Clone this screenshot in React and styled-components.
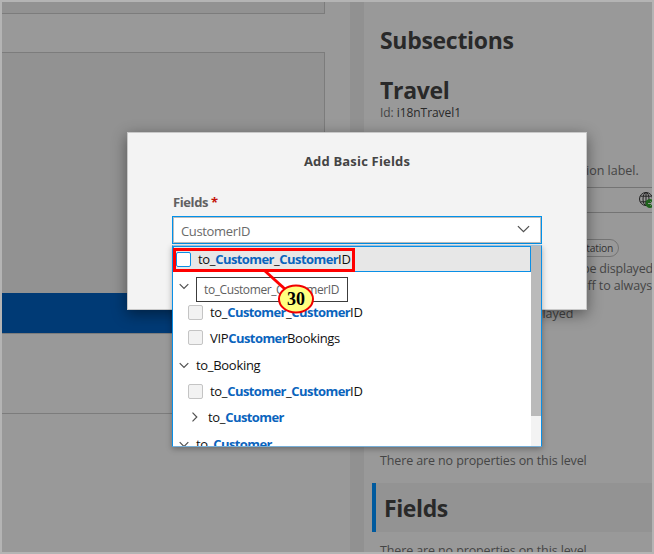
import React from "react";
import styled, { createGlobalStyle } from "styled-components";

const Global = createGlobalStyle`
  * { box-sizing: border-box; }
  body { margin: 0; font-family: "Open Sans", "Noto Sans", sans-serif; overflow: hidden; }
`;

const Frame = styled.div`
  position: relative;
  width: 654px;
  height: 554px;
  border: 2px solid #b4b4b4;
  background: #999;
  overflow: hidden;
`;

const Workspace = styled.div`
  display: grid;
  grid-template-columns: 348px 14px minmax(0, 1fr);
  height: 550px;
`;

const Canvas = styled.div`
  display: flex;
  flex-direction: column;
`;

const Panel = styled.div`
  width: 323px;
  height: ${(p) => p.$height}px;
  margin-bottom: ${(p) => p.$gap || 0}px;
  background: #929292;
  border: solid #7c7c7c;
  border-width: ${(p) => (p.$top ? "1px 1px 1px 0" : "0 1px 1px 0")};
  display: flex;
  flex-direction: column;
  justify-content: flex-end;
`;

const SelectedBand = styled.div`
  height: 40px;
  background: #003a75;
`;

const Rule = styled.div`
  width: 323px;
  margin-top: 79px;
  border-top: 1px solid #7c7c7c;
`;

const Splitter = styled.div`
  background: #919191;
`;

const Side = styled.div`
  display: flex;
  flex-direction: column;
  height: 550px;
  overflow: hidden;
  white-space: nowrap;
  color: #454545;
`;

const Heading = styled.div`
  margin: ${(p) => p.$gap}px 0 0 16px;
  height: 30px;
  line-height: 30px;
  font-size: 23px;
  font-weight: 700;
  letter-spacing: -0.3px;
  color: #292929;
  flex: none;
`;

const Line = styled.div`
  height: 18px;
  line-height: 18px;
  margin: ${(p) => p.$gap || 0}px 0 0 ${(p) => p.$indent || 16}px;
  font-size: ${(p) => p.$size || 12.5}px;
  letter-spacing: ${(p) => p.$track || 0}px;
  flex: none;
  b { font-weight: 500; color: #292929; }
`;

const LabelField = styled.div`
  display: flex;
  align-items: center;
  justify-content: flex-end;
  flex: none;
  height: 26px;
  margin: 7px 0 0 16px;
  border: solid #747474;
  border-width: 1px 0;
`;

const Tag = styled.div`
  align-self: flex-start;
  flex: none;
  width: 103px;
  height: 18px;
  line-height: 16px;
  margin: 26px 0 0 152px;
  padding-right: 5px;
  text-align: right;
  border: 1px solid #747474;
  border-radius: 9px;
  font-size: 10.3px;
  letter-spacing: -0.25px;
  color: #333;
`;

const ActiveSection = styled.div`
  height: 49px;
  flex: none;
  margin: 13px 0 0 8px;
  padding: 10px 0 0 8px;
  border-left: 4px solid #005a9e;
  background: #939393;
  font-size: 23px;
  line-height: 30px;
  font-weight: 700;
  letter-spacing: -0.4px;
  color: #292929;
`;

const Dialog = styled.section`
  position: absolute;
  left: 125px;
  top: 130px;
  width: 460px;
  height: 178px;
  padding: 0 44px;
  border: 1px solid #c8c8c8;
  background: #f3f3f3;
  box-shadow: 0 4px 14px rgba(0, 0, 0, 0.45);
`;

const DialogTitle = styled.div`
  margin-top: 18px;
  line-height: 20px;
  text-align: center;
  font-size: 13px;
  font-weight: 700;
  letter-spacing: 0.18px;
  color: #444;
`;

const FieldLabel = styled.div`
  margin: 21px 0 0 1px;
  line-height: 20px;
  font-size: 13px;
  font-weight: 700;
  letter-spacing: -0.4px;
  color: #616161;
  span { color: #c4120a; }
`;

const Combo = styled.div`
  display: flex;
  align-items: center;
  justify-content: space-between;
  width: 370px;
  height: 28px;
  margin-top: 4px;
  padding: 0 11px 0 8px;
  border: 1px solid #0091ea;
  box-shadow: inset 0 0 0 1px #bdbdbd;
  background: #fff;
  font-size: 13px;
  letter-spacing: -0.35px;
  color: #6a6a6a;
  span { padding-top: 2px; }
  svg { margin-top: -3px; }
`;

const Popup = styled.div`
  position: absolute;
  left: 170px;
  top: 243px;
  width: 370px;
  height: 202px;
  display: flex;
  border: 1px solid #0a8fe6;
  border-top-color: #9bbfdb;
  border-bottom-color: #78afd8;
  background: #fff;
  box-shadow: 0 2px 6px rgba(0, 0, 0, 0.3);
  overflow: hidden;
`;

const Options = styled.div`
  flex: 1;
  min-width: 0;
`;

const Option = styled.div`
  display: flex;
  align-items: center;
  height: ${(p) => p.$height || 26}px;
  padding-left: ${(p) => p.$indent}px;
  gap: ${(p) => p.$gap}px;
  font-size: 13px;
  letter-spacing: -0.3px;
  white-space: nowrap;
  color: #111;
  border: ${(p) => (p.$active ? "1px solid #0a8fe6" : "0")};
  background: ${(p) => (p.$active ? "#e7e7e7" : "transparent")};
  b { color: #0a64bd; letter-spacing: -0.58px; }
`;

const Check = styled.i`
  width: 15px;
  height: 15px;
  border: 1px solid ${(p) => (p.$active ? "#0a8fe6" : "#c4c4c4")};
  border-radius: 2px;
  background: ${(p) => (p.$active ? "#fff" : "#f2f2f2")};
`;

const Scrollbar = styled.div`
  width: 10px;
  background: #f3f3f3;
`;

const Thumb = styled.div`
  height: 170px;
  background: #bababa;
`;

const Tooltip = styled.div`
  position: absolute;
  left: 194px;
  top: 275px;
  width: 152px;
  height: 25px;
  padding-left: 7px;
  border: 1px solid #3c3c3c;
  background: #fff;
  line-height: 24px;
  font-size: 12px;
  letter-spacing: -0.4px;
  color: #606060;
`;

const Outline = styled.div`
  position: absolute;
  left: 171px;
  top: 246px;
  width: 182px;
  height: 24px;
  border: 3px solid #ff0000;
`;

const Callout = styled.svg`
  position: absolute;
  left: 258px;
  top: 266px;
  width: 60px;
  height: 50px;
  text {
    font: 700 18px "Liberation Serif", serif;
    text-anchor: middle;
  }
`;

const Chevron = ({ size = 10, right }) => (
  <svg width={size} height={size} viewBox="0 0 10 10" fill="none" stroke="#505050" strokeWidth={size > 10 ? 0.95 : 1.2}>
    <path d={right ? "M2.5 .7 6.8 5 2.5 9.3" : "M.7 3.2 5 7.5 9.3 3.2"} />
  </svg>
);

const Globe = () => (
  <svg width="13" height="18" viewBox="0 0 13 18" fill="none" stroke="#222" strokeWidth="1">
    <circle cx="7" cy="8" r="6.5" />
    <ellipse cx="7" cy="8" rx="3" ry="6.5" />
    <path d="M1.4 5.2h11.2M1.4 10.8h11.2M7 1.5v13" />
    <circle cx="11" cy="12.5" r="4.5" fill="#20631d" stroke="none" />
    <path d="M9 12.5h4M11.5 10.3l2 2.2-2 2.2" stroke="#999" />
  </svg>
);

const CustomerId = () => (
  <span>to_<b>Customer</b>_<b>Customer</b>ID</span>
);

export default function App() {
  return (
    <>
      <Global />
      <Frame>
        <Workspace>
          <Canvas>
            <Panel $height={12} $gap={38} />
            <Panel $height={282} $top><SelectedBand /></Panel>
            <Rule />
          </Canvas>
          <Splitter />
          <Side>
            <Heading $gap={23}>Subsections</Heading>
            <Heading $gap={20}>Travel</Heading>
            <Line $size={12} $gap={-1} $track={-0.06}>Id: <b>i18nTravel1</b></Line>
            <Line $gap={40} $indent={222}>ion label.</Line>
            <LabelField><Globe /></LabelField>
            <Tag>Annotation</Tag>
            <Line $gap={3} $indent={218} $track={-0.2}>be displayed</Line>
            <Line $gap={-1} $indent={216} $track={-0.1}>off to always</Line>
            <Line $gap={10} $indent={154}>displayed</Line>
            <Line $gap={129} $track={-0.12}>There are no properties on this level</Line>
            <ActiveSection>Fields</ActiveSection>
            <Line $gap={10} $track={-0.12}>There are no properties on this level</Line>
          </Side>
        </Workspace>

        <Dialog>
          <DialogTitle>Add Basic Fields</DialogTitle>
          <FieldLabel>Fields <span>*</span></FieldLabel>
          <Combo><span>CustomerID</span><Chevron size={13} /></Combo>
        </Dialog>

        <Popup>
          <Options>
            <Option $active $indent={2} $gap={7}><Check $active /><CustomerId /></Option>
            <Option $height={28} $indent={6} $gap={7}><Chevron /></Option>
            <Option $height={24} $indent={15} $gap={7}><Check /><CustomerId /></Option>
            <Option $height={27} $indent={15} $gap={7}><Check /><span>VIP<b>Customer</b>Bookings</span></Option>
            <Option $height={27} $indent={6} $gap={7}><Chevron /><span>to_Booking</span></Option>
            <Option $indent={15} $gap={7}><Check /><CustomerId /></Option>
            <Option $indent={17} $gap={8}><Chevron right /><span>to_<b>Customer</b></span></Option>
            <Option $height={27} $indent={6} $gap={7}><Chevron /><span>to_<b>Customer</b></span></Option>
          </Options>
          <Scrollbar><Thumb /></Scrollbar>
        </Popup>

        <Tooltip>to_Customer_CustomerID</Tooltip>
        <Outline />
        <Callout viewBox="0 0 60 50">
          <path d="M5 3 26 22" stroke="#ff0000" strokeWidth="3" />
          <ellipse cx="36" cy="31" rx="17" ry="13.5" fill="#ffff80" stroke="#f00000" strokeWidth="2" />
          <text x="36" y="37">30</text>
        </Callout>
      </Frame>
    </>
  );
}
